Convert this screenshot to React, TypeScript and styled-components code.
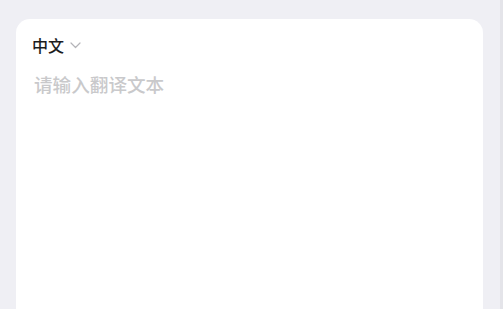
import styled, { createGlobalStyle } from "styled-components";

const GlobalStyle = createGlobalStyle`
  html, body {
    margin: 0;
    padding: 0;
    height: 100%;
    overflow: hidden;
    background: #efeff4;
  }
  #root {
    height: 100%;
  }
`;

const Page = styled.div`
  display: flex;
  height: 100%;
  font-family: "Noto Sans CJK SC", "Noto Sans", sans-serif;
`;

const Main = styled.div`
  flex: 1;
  display: flex;
  padding: 19px 17px 0 16px;
`;

const Strip = styled.div`
  width: 3px;
  background: #e4e4e9;
`;

const Card = styled.div`
  flex: 1;
  display: flex;
  flex-direction: column;
  background: #fff;
  border-radius: 14px 14px 0 0;
  padding: 15px 17px 0 16px;
`;

const LangPicker = styled.button`
  align-self: flex-start;
  display: flex;
  align-items: center;
  gap: 6px;
  border: 0;
  background: none;
  padding: 0;
  font-family: inherit;
  font-size: 16px;
  line-height: 22px;
  font-weight: 500;
  color: #1c1c1e;
  cursor: pointer;
`;

const Input = styled.textarea`
  flex: 1;
  margin-top: 15px;
  border: 0;
  outline: none;
  resize: none;
  padding: 0 0 0 2px;
  font-family: inherit;
  font-size: 18.6px;
  line-height: 26px;
  font-weight: 500;
  color: #1c1c1e;
  background: transparent;

  &::placeholder {
    color: #c9c9cb;
  }
`;

const Chevron = () => (
  <svg width="11" height="7" viewBox="0 0 11 7" fill="none">
    <path d="M1 1l4.5 4.5L10 1" stroke="#b4b4b8" strokeWidth="1.2" strokeLinecap="round" strokeLinejoin="round" />
  </svg>
);

export default function App() {
  return (
    <>
      <GlobalStyle />
      <Page>
        <Main>
          <Card>
            <LangPicker>
              中文
              <Chevron />
            </LangPicker>
            <Input placeholder="请输入翻译文本" />
          </Card>
        </Main>
        <Strip />
      </Page>
    </>
  );
}
